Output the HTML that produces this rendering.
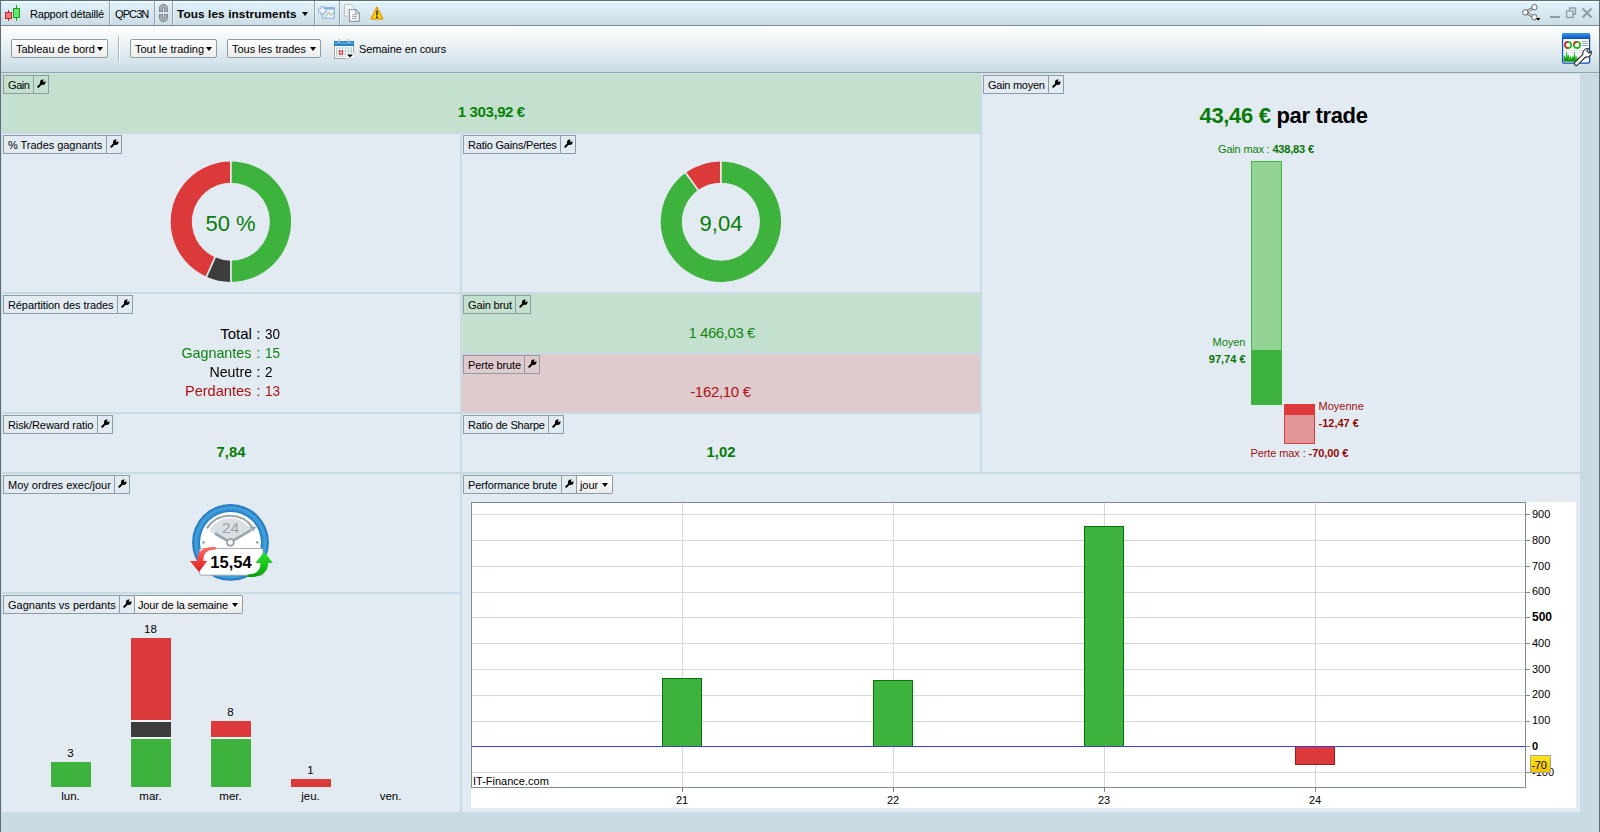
<!DOCTYPE html>
<html><head><meta charset="utf-8">
<style>
*{box-sizing:border-box}
html,body{margin:0;padding:0}
body{width:1600px;height:832px;overflow:hidden;position:relative;background:#c8dae4;font-family:"Liberation Sans",sans-serif;font-size:11px;color:#000}
.a{position:absolute}
.fr{background:#5f6d74}
#topbar{left:1px;top:1px;width:1598px;height:24px;background:linear-gradient(#f2fbff 0px,#f2fbff 1px,#e0f2f9 2px,#ccdce5)}
#topline{left:1px;top:25px;width:1598px;height:1px;background:#7a8a92}
#toolbar{left:1px;top:26px;width:1598px;height:46px;background:linear-gradient(#ffffff,#f0f5f7 30%,#c9dbe5)}
#toolline{left:1px;top:72px;width:1598px;height:1px;background:#94a3ab}
.sep{width:1px;background:#93a0a6;box-shadow:1px 0 0 rgba(255,255,255,0.45)}
.tt{white-space:pre;line-height:13px}
.btn{height:19px;border:1px solid #8f9da5;border-radius:2px;background:linear-gradient(#ffffff,#ececec)}
.btn span{position:absolute;left:4px;top:3px;white-space:pre;line-height:13px}
.arr{position:absolute;width:0;height:0;border-left:3.5px solid transparent;border-right:3.5px solid transparent;border-top:4px solid #000}
.pan{background:#e3ebf2}
.gpan{background:#c4e0ce}
.rpan{background:#dfcacd}
.lbl{height:19px;border:1px solid #8e9ca4}
.gpan .lbl{border-color:#8aa897}
.rpan .lbl{border-color:#a59596}
.lbl .t{position:absolute;left:4px;top:3px;white-space:pre;line-height:13px;transform-origin:0 0}
.lbl .d{position:absolute;top:0;width:1px;height:17px;background:inherit}
.wr{position:absolute;top:3px;width:9px;height:9px}
</style><style>
.lbl .dv{position:absolute;top:0;width:1px;height:17px;background:#8e9ca4}
.gpan .lbl .dv{background:#8aa897}
.rpan .lbl .dv{background:#a59596}
.drp{height:19px;border:1px solid #8f9da5;border-left:none;border-radius:0 2px 2px 0;background:linear-gradient(#ffffff,#ebebeb)}
.drp .t{position:absolute;left:3px;top:3px;white-space:pre;line-height:13px;transform-origin:0 0}
</style></head><body>
<!-- frame -->
<div class="a fr" style="left:0;top:0;width:1px;height:832px"></div>
<div class="a fr" style="left:1599px;top:0;width:1px;height:832px"></div>
<div class="a fr" style="left:0;top:0;width:1600px;height:1px"></div>
<div id="topbar" class="a"></div>
<div id="topline" class="a"></div>
<div id="toolbar" class="a"></div>
<div id="toolline" class="a"></div>
<div class="a" style="left:1px;top:73px;width:1598px;height:1px;background:#d3e2ea"></div>


<!-- TOPBAR CONTENT -->
<svg class="a" style="left:4px;top:4px" width="18" height="18" viewBox="0 0 18 18">
 <line x1="4.5" y1="6" x2="4.5" y2="17" stroke="#c02828" stroke-width="1"/>
 <rect x="1.5" y="8.5" width="6" height="6" fill="#f27a7a" stroke="#c02828" stroke-width="1"/>
 <line x1="12.5" y1="1" x2="12.5" y2="17" stroke="#18a018" stroke-width="1"/>
 <rect x="9.5" y="4.5" width="6" height="9" fill="#6ae46a" stroke="#18a018" stroke-width="1"/>
</svg>
<div class="a tt" style="left:30px;top:8px;letter-spacing:-0.2px">Rapport détaillé</div>
<div class="a sep" style="left:109px;top:1px;height:24px"></div>
<div class="a tt" style="left:115px;top:8px;letter-spacing:-0.9px">QPC3N</div>
<div class="a sep" style="left:154px;top:1px;height:24px"></div>
<svg class="a" style="left:156px;top:3px" width="16" height="21" viewBox="0 0 16 21">
 <path d="M5 9 V5.5 a2.5 2.5 0 0 1 5 0 V9 M5 11 V14.5 a2.5 2.5 0 0 0 5 0 V11" fill="none" stroke="#747d82" stroke-width="3.9"/>
 <path d="M5 8.4 V5.5 a2.5 2.5 0 0 1 5 0 V8.4 M5 11.6 V14.5 a2.5 2.5 0 0 0 5 0 V11.6" fill="none" stroke="#a6aeb2" stroke-width="2.4"/>
</svg>
<div class="a sep" style="left:172px;top:1px;height:24px"></div>
<div class="a tt" style="left:177px;top:8px;font-weight:bold;font-size:11.8px;letter-spacing:0.1px">Tous les instruments</div>
<div class="arr" style="left:302px;top:12px"></div>
<div class="a sep" style="left:314px;top:1px;height:24px"></div>
<svg class="a" style="left:318px;top:6px" width="18" height="14" viewBox="0 0 18 14">
 <rect x="4.6" y="1.7" width="11.7" height="10.6" rx="0.8" fill="#eef4fa" stroke="#88ace0" stroke-width="1.1"/>
 <rect x="4.1" y="1.2" width="12.7" height="2.5" fill="#8fb2e2"/>
 <path d="M7 11.9 L10.5 6.2" stroke="#8ad890" stroke-width="1.1"/>
 <path d="M10.5 6.2 L12.9 9.5" stroke="#ec9a9a" stroke-width="1.1"/>
 <path d="M12.9 9.5 L15.8 5.8" stroke="#8ad890" stroke-width="1.1"/>
 <rect x="2.4" y="0.2" width="4.2" height="8.6" fill="#8fb2e2"/><rect x="0.2" y="2.4" width="8.6" height="4.2" fill="#8fb2e2"/><rect x="3.4" y="1.2" width="2.2" height="6.6" fill="#f6f9fd"/><rect x="1.2" y="3.4" width="6.6" height="2.2" fill="#f6f9fd"/>
</svg>
<div class="a sep" style="left:339px;top:1px;height:24px"></div>
<svg class="a" style="left:343px;top:3px" width="18" height="20" viewBox="0 0 18 20">
 <path d="M1.5 1.5 H7.8 L11 4.7 V13 H1.5 Z" fill="#f4f7fa" stroke="#b6c0c4" stroke-width="1"/>
 <path d="M3.5 6 H6 M3.5 8 H6 M3.5 10 H6" stroke="#c8d0d4" stroke-width="0.8"/>
 <path d="M6.5 6.5 H12.6 L16.3 10.2 V18.3 H6.5 Z" fill="#ffffff" stroke="#8e999e" stroke-width="1.2" stroke-linejoin="round"/>
 <path d="M12.3 6.5 V10.4 H16.3" fill="none" stroke="#8e999e" stroke-width="0.9"/>
 <path d="M9 11.8 H14 M9 13.7 H14 M9 15.7 H14" stroke="#8e999e" stroke-width="0.9"/>
</svg>
<svg class="a" style="left:370px;top:6px" width="14" height="14" viewBox="0 0 14 14">
 <path d="M7 1 L13 13 H1 Z" fill="#ffd400" stroke="#e08000" stroke-width="1"/>
 <rect x="6.2" y="4.5" width="1.6" height="5" fill="#333"/>
 <rect x="6.2" y="10.5" width="1.6" height="1.6" fill="#000"/>
</svg>
<!-- right icons -->
<svg class="a" style="left:1521px;top:2px" width="22" height="21" viewBox="0 0 22 21">
 <path d="M4.3 10.4 L13.4 5.2 M4.3 10.4 L13.4 15.3" stroke="#5a6468" stroke-width="2.6"/>
 <path d="M4.3 10.4 L13.4 5.2 M4.3 10.4 L13.4 15.3" stroke="#fff" stroke-width="1"/>
 <circle cx="13.4" cy="5.2" r="2.7" fill="#fff" stroke="#5a6468" stroke-width="1"/>
 <circle cx="4.3" cy="10.4" r="2.7" fill="#fff" stroke="#5a6468" stroke-width="1"/>
 <circle cx="13.4" cy="15.3" r="2.7" fill="#fff" stroke="#5a6468" stroke-width="1"/>
 <path d="M13.6 15.4 H20.6 L17.1 19.2 Z" fill="#000" stroke="#fff" stroke-width="0.8" stroke-linejoin="round"/>
</svg>
<div class="a" style="left:1550px;top:16px;width:10px;height:2px;background:#8f9ca2"></div>
<svg class="a" style="left:1565px;top:7px" width="12" height="12" viewBox="0 0 12 12">
 <path d="M4.5 3.5 V1 H10.5 V7 H8" fill="none" stroke="#8f9ca2" stroke-width="1.3"/>
 <rect x="1.5" y="4" width="6.5" height="6.5" fill="none" stroke="#8f9ca2" stroke-width="1.3"/>
</svg>
<svg class="a" style="left:1581px;top:7px" width="12" height="12" viewBox="0 0 12 12">
 <path d="M1.5 1.5 L10.5 10.5 M10.5 1.5 L1.5 10.5" stroke="#8f9ca2" stroke-width="2"/>
</svg>

<!-- TOOLBAR CONTENT -->
<div class="a btn" style="left:11px;top:39px;width:97px"><span>Tableau de bord</span><div class="arr" style="left:85px;top:7px"></div></div>
<div class="a sep" style="left:118px;top:36px;height:26px;background:#a9b5bb;box-shadow:1px 0 0 #fff"></div>
<div class="a btn" style="left:130px;top:39px;width:87px"><span>Tout le trading</span><div class="arr" style="left:75px;top:7px"></div></div>
<div class="a btn" style="left:227px;top:39px;width:94px"><span>Tous les trades</span><div class="arr" style="left:82px;top:7px"></div></div>
<svg class="a" style="left:333px;top:38px" width="22" height="22" viewBox="0 0 22 22">
 <rect x="1.5" y="6" width="19" height="14.5" fill="#fff" stroke="#a6a6a6" stroke-width="1"/>
 <rect x="1" y="3" width="20" height="5" fill="#2a82c8"/>
 <rect x="2" y="4" width="18" height="2" fill="#48a0dc"/>
 <rect x="5" y="1" width="1.6" height="4" fill="#c8bcbc"/>
 <rect x="15" y="1" width="1.6" height="4" fill="#c8bcbc"/>
 <rect x="3" y="9.5" width="16" height="9.5" fill="#b8d0dc"/>
 <g fill="#fff">
  <rect x="4" y="10.5" width="2" height="2"/><rect x="7" y="10.5" width="2" height="2"/><rect x="10" y="10.5" width="2" height="2"/><rect x="13" y="10.5" width="2" height="2"/><rect x="16" y="10.5" width="2" height="2"/>
  <rect x="4" y="13.5" width="2" height="2"/><rect x="10" y="13.5" width="2" height="2"/><rect x="13" y="13.5" width="2" height="2"/><rect x="16" y="13.5" width="2" height="2"/>
  <rect x="4" y="16.5" width="2" height="2"/><rect x="7" y="16.5" width="2" height="2"/><rect x="10" y="16.5" width="2" height="2"/>
 </g>
 <rect x="6.5" y="13" width="3" height="3" fill="#fff" stroke="#f03030" stroke-width="1.2"/>
 <rect x="13" y="15.5" width="8" height="5" fill="#fff"/>
 <path d="M14 16.5 H20 L17 19.5 Z" fill="#000"/>
</svg>
<div class="a tt" style="left:359px;top:43px;letter-spacing:-0.1px">Semaine en cours</div>
<!-- big dashboard icon -->
<svg class="a" style="left:1561px;top:32px" width="34" height="35" viewBox="0 0 34 35">
 <defs><linearGradient id="dhg" x1="0" y1="0" x2="0" y2="1"><stop offset="0" stop-color="#3a98e4"/><stop offset="1" stop-color="#0850c0"/></linearGradient></defs>
 <rect x="1.6" y="1.6" width="27" height="29.6" rx="1.6" fill="#fff" stroke="#0c4cc4" stroke-width="1.3"/>
 <path d="M1 3 a2 2 0 0 1 2 -2 H27 a2 2 0 0 1 2 2 V7 H1 Z" fill="url(#dhg)"/>
 <circle cx="7.1" cy="12.9" r="3.1" fill="none" stroke="#28b828" stroke-width="1.8"/>
 <path d="M7.1 16 A3.1 3.1 0 0 1 7.1 9.8" fill="none" stroke="#d82828" stroke-width="1.8"/>
 <circle cx="16" cy="12.9" r="3.1" fill="none" stroke="#28b828" stroke-width="1.8"/>
 <path d="M12.9 12.9 A3.1 3.1 0 0 1 16 9.8" fill="none" stroke="#d82828" stroke-width="1.8"/>
 <path d="M21 9.4 H26.8 M21 11.4 H26.8 M21 13.5 H26.8" stroke="#8c9aa6" stroke-width="0.9"/>
 <path d="M3 18.5 H22 M3 20.5 H22" stroke="#e2e6e8" stroke-width="0.8"/>
 <path d="M2.5 29.5 V25 L3.5 23 L4.5 26 L5.5 18 L6.5 24 L7.5 22 L8.5 26 L9.5 23.5 L10.5 27 L11.5 24 L12.5 25 L13.5 19 L14.5 25 L15.5 24 L16.5 27 L17.5 25 L18.5 28 V29.5 Z" fill="#28b828"/>
 <path d="M3 29.5 V27 L5.5 26 L8 28 L12 26.5 L15 28 L18 27 V29.5 Z" fill="#109010"/>
 <g transform="translate(22.5,24.4) rotate(-45) scale(1.2)">
  <path d="M-8.5 -1.6 L0.9 -1.6 A4 4 0 0 1 7.7 -1.4 L5.2 -1.4 L5.2 1.4 L7.7 1.4 A4 4 0 0 1 0.9 1.6 L-8.5 1.6 A1.6 1.6 0 0 1 -8.5 -1.6 Z" fill="#fff" stroke="#333" stroke-width="0.95" stroke-linejoin="round"/>
 </g>
</svg>

<!-- PANELS -->
<div class="a gpan" style="left:2px;top:74px;width:978px;height:58px"></div>
<div class="a pan" style="left:982px;top:74px;width:598px;height:398px"></div>
<div class="a pan" style="left:2px;top:134px;width:458px;height:158px"></div>
<div class="a pan" style="left:462px;top:134px;width:518px;height:158px"></div>
<div class="a pan" style="left:2px;top:294px;width:458px;height:118px"></div>
<div class="a gpan" style="left:462px;top:294px;width:518px;height:58px"></div>
<div class="a rpan" style="left:462px;top:354px;width:518px;height:58px"></div>
<div class="a pan" style="left:2px;top:414px;width:458px;height:58px"></div>
<div class="a pan" style="left:462px;top:414px;width:518px;height:58px"></div>
<div class="a pan" style="left:2px;top:474px;width:458px;height:118px"></div>
<div class="a pan" style="left:462px;top:474px;width:1118px;height:338px"></div>
<div class="a pan" style="left:2px;top:594px;width:458px;height:218px"></div>

<svg width="0" height="0" style="position:absolute">
<defs>
<mask id="wrm" maskUnits="userSpaceOnUse" x="0" y="0" width="9" height="9"><rect x="0" y="0" width="9" height="9" fill="#fff"/><path d="M6.8 2.1 L10 -1.1" stroke="#000" stroke-width="1.6" stroke-linecap="round"/></mask>
<symbol id="wr" viewBox="0 0 9 9"><g mask="url(#wrm)"><path d="M1.3 7.7 L4.6 4.4" stroke="#000" stroke-width="2" stroke-linecap="round"/><circle cx="5.7" cy="3.2" r="2.7" fill="#000"/></g></symbol>
</defs></svg>
<div class="a lbl " style="left:3px;top:75px;width:46px"><span class="t" style="letter-spacing:-0.425px">Gain</span><div class="dv" style="left:29px"></div><svg class="wr" style="left:33px" width="9" height="9"><use href="#wr"/></svg></div>
<div class="a lbl " style="left:983px;top:75px;width:81px"><span class="t" style="letter-spacing:-0.270px">Gain moyen</span><div class="dv" style="left:64px"></div><svg class="wr" style="left:68px" width="9" height="9"><use href="#wr"/></svg></div>
<div class="a lbl " style="left:3px;top:135px;width:119px"><span class="t" style="letter-spacing:-0.035px">% Trades gagnants</span><div class="dv" style="left:102px"></div><svg class="wr" style="left:106px" width="9" height="9"><use href="#wr"/></svg></div>
<div class="a lbl " style="left:463px;top:135px;width:113px"><span class="t" style="letter-spacing:-0.206px">Ratio Gains/Pertes</span><div class="dv" style="left:96px"></div><svg class="wr" style="left:100px" width="9" height="9"><use href="#wr"/></svg></div>
<div class="a lbl " style="left:3px;top:295px;width:130px"><span class="t" style="letter-spacing:-0.100px">Répartition des trades</span><div class="dv" style="left:113px"></div><svg class="wr" style="left:117px" width="9" height="9"><use href="#wr"/></svg></div>
<div class="a lbl " style="left:463px;top:295px;width:68px"><span class="t" style="letter-spacing:-0.144px">Gain brut</span><div class="dv" style="left:51px"></div><svg class="wr" style="left:55px" width="9" height="9"><use href="#wr"/></svg></div>
<div class="a lbl " style="left:463px;top:355px;width:77px"><span class="t" style="letter-spacing:-0.136px">Perte brute</span><div class="dv" style="left:60px"></div><svg class="wr" style="left:64px" width="9" height="9"><use href="#wr"/></svg></div>
<div class="a lbl " style="left:3px;top:415px;width:110px"><span class="t" style="letter-spacing:-0.088px">Risk/Reward ratio</span><div class="dv" style="left:93px"></div><svg class="wr" style="left:97px" width="9" height="9"><use href="#wr"/></svg></div>
<div class="a lbl " style="left:463px;top:415px;width:101px"><span class="t" style="letter-spacing:-0.180px">Ratio de Sharpe</span><div class="dv" style="left:84px"></div><svg class="wr" style="left:88px" width="9" height="9"><use href="#wr"/></svg></div>
<div class="a lbl " style="left:3px;top:475px;width:127px"><span class="t" style="letter-spacing:0.005px">Moy ordres exec/jour</span><div class="dv" style="left:110px"></div><svg class="wr" style="left:114px" width="9" height="9"><use href="#wr"/></svg></div>
<div class="a lbl " style="left:3px;top:595px;width:132px"><span class="t" style="letter-spacing:0.010px">Gagnants vs perdants</span><div class="dv" style="left:115px"></div><svg class="wr" style="left:119px" width="9" height="9"><use href="#wr"/></svg></div><div class="a drp" style="left:135px;top:595px;width:108px"><span class="t" style="letter-spacing:-0.167px">Jour de la semaine</span><div class="arr" style="left:97px;top:7px"></div></div>
<div class="a lbl " style="left:463px;top:475px;width:114px"><span class="t" style="letter-spacing:-0.124px">Performance brute</span><div class="dv" style="left:97px"></div><svg class="wr" style="left:101px" width="9" height="9"><use href="#wr"/></svg></div><div class="a drp" style="left:577px;top:475px;width:36px"><span class="t" style="letter-spacing:-0.075px">jour</span><div class="arr" style="left:25px;top:7px"></div></div>
<div class="a" style="left:191.3px;width:600px;text-align:center;top:103.10px;font-size:15px;line-height:18px;font-weight:700;color:#0a830a;white-space:pre;letter-spacing:-0.39px">1 303,92 €</div>
<div class="a" style="left:421.70000000000005px;width:600px;text-align:center;top:324.00px;font-size:15px;line-height:18px;font-weight:400;color:#138613;white-space:pre;letter-spacing:-0.43px">1 466,03 €</div>
<div class="a" style="left:420.5px;width:600px;text-align:center;top:383.20px;font-size:15px;line-height:18px;font-weight:400;color:#ad1010;white-space:pre;letter-spacing:-0.31px">-162,10 €</div>
<div class="a" style="left:-69px;width:600px;text-align:center;top:443.27px;font-size:14.8px;line-height:18px;font-weight:700;color:#067c06;white-space:pre">7,84</div>
<div class="a" style="left:421px;width:600px;text-align:center;top:443.27px;font-size:14.8px;line-height:18px;font-weight:700;color:#067c06;white-space:pre">1,02</div>
<div class="a" style="right:1348.2px;top:325.00px;font-size:15px;line-height:18px;font-weight:400;color:#000;white-space:pre;transform:scaleX(1.0);transform-origin:100% 0">Total</div>
<div class="a" style="left:256.2px;top:325.00px;font-size:15px;line-height:18px;font-weight:400;color:#000;white-space:pre">:</div>
<div class="a" style="left:265.3px;top:325.00px;font-size:15px;line-height:18px;font-weight:400;color:#000;white-space:pre;transform:scaleX(0.9);transform-origin:0 0">30</div>
<div class="a" style="right:1348.2px;top:343.90px;font-size:15px;line-height:18px;font-weight:400;color:#0e820e;white-space:pre;transform:scaleX(0.954);transform-origin:100% 0">Gagnantes</div>
<div class="a" style="left:256.2px;top:343.90px;font-size:15px;line-height:18px;font-weight:400;color:#0e820e;white-space:pre">:</div>
<div class="a" style="left:265.3px;top:343.90px;font-size:15px;line-height:18px;font-weight:400;color:#0e820e;white-space:pre;transform:scaleX(0.9);transform-origin:0 0">15</div>
<div class="a" style="right:1348.2px;top:362.80px;font-size:15px;line-height:18px;font-weight:400;color:#000;white-space:pre;transform:scaleX(0.944);transform-origin:100% 0">Neutre</div>
<div class="a" style="left:256.2px;top:362.80px;font-size:15px;line-height:18px;font-weight:400;color:#000;white-space:pre">:</div>
<div class="a" style="left:265.3px;top:362.80px;font-size:15px;line-height:18px;font-weight:400;color:#000;white-space:pre;transform:scaleX(0.9);transform-origin:0 0">2</div>
<div class="a" style="right:1348.2px;top:381.70px;font-size:15px;line-height:18px;font-weight:400;color:#ad1010;white-space:pre;transform:scaleX(0.972);transform-origin:100% 0">Perdantes</div>
<div class="a" style="left:256.2px;top:381.70px;font-size:15px;line-height:18px;font-weight:400;color:#ad1010;white-space:pre">:</div>
<div class="a" style="left:265.3px;top:381.70px;font-size:15px;line-height:18px;font-weight:400;color:#ad1010;white-space:pre;transform:scaleX(0.9);transform-origin:0 0">13</div>
<svg class="a" style="left:0;top:0" width="1600" height="832"><path d="M230.90 161.50 A60.2 60.2 0 0 1 230.90 281.90 L230.90 260.70 A39 39 0 0 0 230.90 182.70 Z" fill="#3db23d"/><path d="M230.90 281.90 A60.2 60.2 0 0 1 206.41 276.70 L215.04 257.33 A39 39 0 0 0 230.90 260.70 Z" fill="#3c3c3c"/><path d="M206.41 276.70 A60.2 60.2 0 0 1 230.90 161.50 L230.90 182.70 A39 39 0 0 0 215.04 257.33 Z" fill="#dc3a3a"/><line x1="230.90" y1="183.70" x2="230.90" y2="160.50" stroke="#f2f5f8" stroke-width="1.6"/><line x1="230.90" y1="259.70" x2="230.90" y2="282.90" stroke="#f2f5f8" stroke-width="1.6"/><line x1="215.44" y1="256.41" x2="206.01" y2="277.61" stroke="#f2f5f8" stroke-width="1.6"/><path d="M720.90 161.50 A60.2 60.2 0 1 1 685.69 172.87 L698.09 190.07 A39 39 0 1 0 720.90 182.70 Z" fill="#3db23d"/><path d="M685.69 172.87 A60.2 60.2 0 0 1 720.90 161.50 L720.90 182.70 A39 39 0 0 0 698.09 190.07 Z" fill="#dc3a3a"/><line x1="720.90" y1="183.70" x2="720.90" y2="160.50" stroke="#f2f5f8" stroke-width="1.6"/><line x1="698.67" y1="190.88" x2="685.10" y2="172.06" stroke="#f2f5f8" stroke-width="1.6"/></svg>
<div class="a" style="left:-69.5px;width:600px;text-align:center;top:210.58px;font-size:22px;line-height:26px;font-weight:400;color:#0a7c0a;white-space:pre">50 %</div>
<div class="a" style="left:421px;width:600px;text-align:center;top:210.58px;font-size:22px;line-height:26px;font-weight:400;color:#0a7c0a;white-space:pre">9,04</div>
<div class="a" style="left:1199.5px;top:103.18px;font-size:22px;line-height:26px;font-weight:700;color:#000;white-space:pre;letter-spacing:-0.33px"><span style="color:#077a07">43,46 €</span> par trade</div>
<div class="a" style="left:1218px;top:142.60px;line-height:13px;color:#0c800c;white-space:pre;letter-spacing:-0.17px">Gain max : <b style="color:#067406">438,83 €</b></div>
<div class="a" style="left:1251px;top:161px;width:31px;height:189px;background:#93d394;border:1px solid #3eb83e;border-bottom:none"></div>
<div class="a" style="left:1251px;top:350px;width:31px;height:55px;background:#3db23d"></div>
<div class="a" style="left:1284px;top:404px;width:31px;height:11px;background:#dc3a3a"></div>
<div class="a" style="left:1284px;top:415px;width:31px;height:29px;background:#e29596;border:1px solid #dc3c3c;border-top:none"></div>
<div class="a" style="right:354.5px;top:335.89px;font-size:11px;line-height:13px;font-weight:400;color:#0c800c;white-space:pre">Moyen</div>
<div class="a" style="right:354.5px;top:352.69px;font-size:11px;line-height:13px;font-weight:700;color:#067406;white-space:pre">97,74 €</div>
<div class="a" style="left:1318.5px;top:399.99px;font-size:11px;line-height:13px;font-weight:400;color:#a01010;white-space:pre">Moyenne</div>
<div class="a" style="left:1318.5px;top:416.69px;font-size:11px;line-height:13px;font-weight:700;color:#940a0a;white-space:pre">-12,47 €</div>
<div class="a" style="left:1250.5px;top:447.10px;line-height:13px;color:#a01010;white-space:pre;letter-spacing:-0.1px">Perte max : <b style="color:#940a0a">-70,00 €</b></div>
<svg class="a" style="left:186px;top:500px" width="92" height="86" viewBox="0 0 92 86">
 <defs>
  <radialGradient id="cring" cx="44.5" cy="42.4" r="38.4" gradientUnits="userSpaceOnUse"><stop offset="0.78" stop-color="#1c74c0"/><stop offset="0.9" stop-color="#46a4dd"/><stop offset="1" stop-color="#1a6fba"/></radialGradient>
  <linearGradient id="rarr" x1="0" y1="0" x2="0" y2="1"><stop offset="0" stop-color="#ff6a6a"/><stop offset="0.6" stop-color="#f03a3a"/><stop offset="1" stop-color="#d42020"/></linearGradient>
  <linearGradient id="garr" x1="0" y1="0" x2="0" y2="1"><stop offset="0" stop-color="#30e030"/><stop offset="0.5" stop-color="#18c818"/><stop offset="1" stop-color="#0c9a0c"/></linearGradient>
 </defs>
 <circle cx="44.5" cy="42.4" r="38.4" fill="url(#cring)"/>
 <circle cx="44.5" cy="42.4" r="30.5" fill="#ffffff"/>
 <path d="M44.5 42.4 L23.3 31.1 A24 24 0 0 1 65.7 31.1 Z" fill="#d9dfe2"/>
 <path d="M20.9 28.4 A27.5 27.5 0 0 1 66.6 27.6" fill="none" stroke="#9ba6ac" stroke-width="2.1"/>
 <path d="M63.2 27.2 L70.4 26.4 L67.4 31.4 Z" fill="#9ba6ac"/>
 <text x="44.6" y="32.8" text-anchor="middle" font-family="Liberation Sans" font-size="15.5" fill="#97a2a8">24</text>
 <path d="M29.9 34 L44.3 42.4 L64.1 30.7" fill="none" stroke="#9ba6ac" stroke-width="2.7" stroke-linecap="round" stroke-linejoin="round"/>
 <circle cx="44.4" cy="42.4" r="3.4" fill="#fff" stroke="#9ba6ac" stroke-width="2"/>
 <circle cx="17.5" cy="42.4" r="1.4" fill="#9ba6ac"/>
 <circle cx="71.3" cy="42.4" r="1.4" fill="#9ba6ac"/>
 <rect x="13.7" y="48.6" width="63.3" height="26.6" rx="1.5" fill="#ffffff" stroke="#9aa2a6" stroke-width="0.9"/>
 <path d="M30 47.2 C18 46.3 12 51 11.5 58 L11.4 61 L4 61 L12.9 72 L21.3 61 L17.4 61 C17.2 53.5 21 49.3 30 49.6 Z" fill="url(#rarr)"/>
 <path d="M69.6 63 L78.2 51.8 L86.8 63 L82.2 63 C82.2 72 75.5 78 61.5 77 L61.5 74.6 C70 74.8 74.6 70.5 74.4 63 Z" fill="url(#garr)"/>
</svg>
<div class="a" style="left:-69px;width:600px;text-align:center;top:551.78px;font-size:16.5px;line-height:20px;font-weight:700;color:#000;white-space:pre">15,54</div>
<div class="a" style="left:51px;top:762px;width:40px;height:25px;background:#3db23d"></div>
<div class="a" style="left:131px;top:638px;width:40px;height:82px;background:#dc3a3a"></div>
<div class="a" style="left:131px;top:722px;width:40px;height:15px;background:#3c3c3c"></div>
<div class="a" style="left:131px;top:739px;width:40px;height:48px;background:#3db23d"></div>
<div class="a" style="left:131px;top:720px;width:40px;height:2px;background:#e9f5f9"></div>
<div class="a" style="left:131px;top:737px;width:40px;height:2px;background:#e9f5f9"></div>
<div class="a" style="left:211px;top:721px;width:40px;height:16px;background:#dc3a3a"></div>
<div class="a" style="left:211px;top:739px;width:40px;height:48px;background:#3db23d"></div>
<div class="a" style="left:211px;top:737px;width:40px;height:2px;background:#e9f5f9"></div>
<div class="a" style="left:291px;top:779px;width:40px;height:8px;background:#dc3a3a"></div>
<div class="a" style="left:-229.5px;width:600px;text-align:center;top:745.62px;font-size:11.5px;line-height:14px;font-weight:400;color:#000;white-space:pre">3</div>
<div class="a" style="left:-149.5px;width:600px;text-align:center;top:622.02px;font-size:11.5px;line-height:14px;font-weight:400;color:#000;white-space:pre">18</div>
<div class="a" style="left:-69.5px;width:600px;text-align:center;top:705.02px;font-size:11.5px;line-height:14px;font-weight:400;color:#000;white-space:pre">8</div>
<div class="a" style="left:10.5px;width:600px;text-align:center;top:762.52px;font-size:11.5px;line-height:14px;font-weight:400;color:#000;white-space:pre">1</div>
<div class="a" style="left:-229.5px;width:600px;text-align:center;top:789.02px;font-size:11.5px;line-height:14px;font-weight:400;color:#000;white-space:pre">lun.</div>
<div class="a" style="left:-149.5px;width:600px;text-align:center;top:789.02px;font-size:11.5px;line-height:14px;font-weight:400;color:#000;white-space:pre">mar.</div>
<div class="a" style="left:-69.5px;width:600px;text-align:center;top:789.02px;font-size:11.5px;line-height:14px;font-weight:400;color:#000;white-space:pre">mer.</div>
<div class="a" style="left:10.5px;width:600px;text-align:center;top:789.02px;font-size:11.5px;line-height:14px;font-weight:400;color:#000;white-space:pre">jeu.</div>
<div class="a" style="left:90.5px;width:600px;text-align:center;top:789.02px;font-size:11.5px;line-height:14px;font-weight:400;color:#000;white-space:pre">ven.</div>
<div class="a" style="left:471px;top:502px;width:1105px;height:306px;background:#fff"></div>
<svg class="a" style="left:0;top:0" width="1600" height="832" shape-rendering="crispEdges"><line x1="472" y1="772.5" x2="1525" y2="772.5" stroke="#d3dadd" stroke-width="1"/><line x1="1525" y1="772.5" x2="1530" y2="772.5" stroke="#808c92" stroke-width="1"/><line x1="1525" y1="746.5" x2="1530" y2="746.5" stroke="#808c92" stroke-width="1"/><line x1="472" y1="721.5" x2="1525" y2="721.5" stroke="#d3dadd" stroke-width="1"/><line x1="1525" y1="721.5" x2="1530" y2="721.5" stroke="#808c92" stroke-width="1"/><line x1="472" y1="695.5" x2="1525" y2="695.5" stroke="#d3dadd" stroke-width="1"/><line x1="1525" y1="695.5" x2="1530" y2="695.5" stroke="#808c92" stroke-width="1"/><line x1="472" y1="669.5" x2="1525" y2="669.5" stroke="#d3dadd" stroke-width="1"/><line x1="1525" y1="669.5" x2="1530" y2="669.5" stroke="#808c92" stroke-width="1"/><line x1="472" y1="643.5" x2="1525" y2="643.5" stroke="#d3dadd" stroke-width="1"/><line x1="1525" y1="643.5" x2="1530" y2="643.5" stroke="#808c92" stroke-width="1"/><line x1="472" y1="617.5" x2="1525" y2="617.5" stroke="#d3dadd" stroke-width="1"/><line x1="1525" y1="617.5" x2="1530" y2="617.5" stroke="#808c92" stroke-width="1"/><line x1="472" y1="592.5" x2="1525" y2="592.5" stroke="#d3dadd" stroke-width="1"/><line x1="1525" y1="592.5" x2="1530" y2="592.5" stroke="#808c92" stroke-width="1"/><line x1="472" y1="566.5" x2="1525" y2="566.5" stroke="#d3dadd" stroke-width="1"/><line x1="1525" y1="566.5" x2="1530" y2="566.5" stroke="#808c92" stroke-width="1"/><line x1="472" y1="540.5" x2="1525" y2="540.5" stroke="#d3dadd" stroke-width="1"/><line x1="1525" y1="540.5" x2="1530" y2="540.5" stroke="#808c92" stroke-width="1"/><line x1="472" y1="514.5" x2="1525" y2="514.5" stroke="#d3dadd" stroke-width="1"/><line x1="1525" y1="514.5" x2="1530" y2="514.5" stroke="#808c92" stroke-width="1"/><line x1="682.5" y1="503" x2="682.5" y2="787" stroke="#d3dadd" stroke-width="1"/><line x1="682.5" y1="787" x2="682.5" y2="792" stroke="#808c92" stroke-width="1"/><line x1="893.5" y1="503" x2="893.5" y2="787" stroke="#d3dadd" stroke-width="1"/><line x1="893.5" y1="787" x2="893.5" y2="792" stroke="#808c92" stroke-width="1"/><line x1="1104.5" y1="503" x2="1104.5" y2="787" stroke="#d3dadd" stroke-width="1"/><line x1="1104.5" y1="787" x2="1104.5" y2="792" stroke="#808c92" stroke-width="1"/><line x1="1315.5" y1="503" x2="1315.5" y2="787" stroke="#d3dadd" stroke-width="1"/><line x1="1315.5" y1="787" x2="1315.5" y2="792" stroke="#808c92" stroke-width="1"/><rect x="471.5" y="502.5" width="1054" height="285" fill="none" stroke="#7f8b91" stroke-width="1"/><rect x="662.5" y="678.5" width="39" height="68" fill="#3db23d" stroke="#067406" stroke-width="1"/><rect x="873.5" y="680.5" width="39" height="66" fill="#3db23d" stroke="#067406" stroke-width="1"/><rect x="1084.5" y="526.5" width="39" height="220" fill="#3db23d" stroke="#067406" stroke-width="1"/><rect x="1295.5" y="746.5" width="39" height="18" fill="#dc3a3a" stroke="#a01818" stroke-width="1"/><line x1="472" y1="746.5" x2="1525" y2="746.5" stroke="#3a3ad8" stroke-width="1"/></svg>
<div class="a" style="left:1532px;top:765.77px;font-size:11px;line-height:13px;font-weight:400;color:#000;white-space:pre">-100</div>
<div class="a" style="left:1532px;top:739.99px;font-size:11px;line-height:13px;font-weight:700;color:#000;white-space:pre">0</div>
<div class="a" style="left:1532px;top:714.21px;font-size:11px;line-height:13px;font-weight:400;color:#000;white-space:pre">100</div>
<div class="a" style="left:1532px;top:688.43px;font-size:11px;line-height:13px;font-weight:400;color:#000;white-space:pre">200</div>
<div class="a" style="left:1532px;top:662.65px;font-size:11px;line-height:13px;font-weight:400;color:#000;white-space:pre">300</div>
<div class="a" style="left:1532px;top:636.87px;font-size:11px;line-height:13px;font-weight:400;color:#000;white-space:pre">400</div>
<div class="a" style="left:1532px;top:610.24px;font-size:12px;line-height:14px;font-weight:700;color:#000;white-space:pre">500</div>
<div class="a" style="left:1532px;top:585.31px;font-size:11px;line-height:13px;font-weight:400;color:#000;white-space:pre">600</div>
<div class="a" style="left:1532px;top:559.53px;font-size:11px;line-height:13px;font-weight:400;color:#000;white-space:pre">700</div>
<div class="a" style="left:1532px;top:533.75px;font-size:11px;line-height:13px;font-weight:400;color:#000;white-space:pre">800</div>
<div class="a" style="left:1532px;top:507.97px;font-size:11px;line-height:13px;font-weight:400;color:#000;white-space:pre">900</div>
<div class="a" style="left:1530px;top:755px;width:21px;height:18px;background:linear-gradient(#ffe31a,#f2c200);border:1px solid #a8a590"></div>
<div class="a" style="left:1531.5px;top:758.69px;font-size:11px;line-height:13px;font-weight:400;color:#000;white-space:pre;letter-spacing:-0.3px">-70</div>
<div class="a" style="left:473px;top:775.19px;font-size:11px;line-height:13px;font-weight:400;color:#000;white-space:pre">IT-Finance.com</div>
<div class="a" style="left:382px;width:600px;text-align:center;top:793.99px;font-size:11px;line-height:13px;font-weight:400;color:#000;white-space:pre">21</div>
<div class="a" style="left:593px;width:600px;text-align:center;top:793.99px;font-size:11px;line-height:13px;font-weight:400;color:#000;white-space:pre">22</div>
<div class="a" style="left:804px;width:600px;text-align:center;top:793.99px;font-size:11px;line-height:13px;font-weight:400;color:#000;white-space:pre">23</div>
<div class="a" style="left:1015px;width:600px;text-align:center;top:793.99px;font-size:11px;line-height:13px;font-weight:400;color:#000;white-space:pre">24</div>
</body></html>
